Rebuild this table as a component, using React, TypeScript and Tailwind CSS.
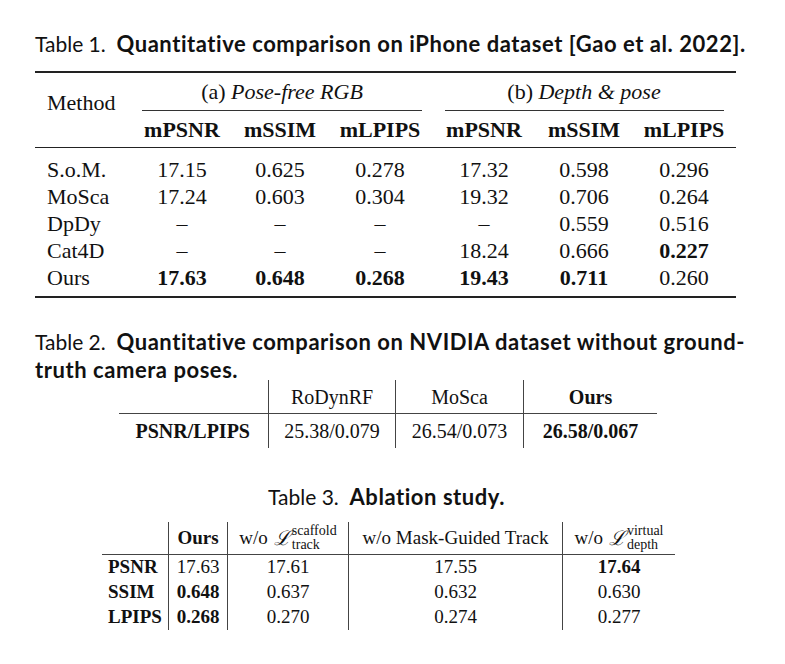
import React from "react";

const serif = "font-['Liberation_Serif','Times_New_Roman',serif]";
const sans = "font-['Lato','Open_Sans',sans-serif]";

const t1Rows = [
  { name: "S.o.M.", v: ["17.15", "0.625", "0.278", "17.32", "0.598", "0.296"], b: [] as number[] },
  { name: "MoSca", v: ["17.24", "0.603", "0.304", "19.32", "0.706", "0.264"], b: [] },
  { name: "DpDy", v: ["–", "–", "–", "–", "0.559", "0.516"], b: [] },
  { name: "Cat4D", v: ["–", "–", "–", "18.24", "0.666", "0.227"], b: [5] },
  { name: "Ours", v: ["17.63", "0.648", "0.268", "19.43", "0.711", "0.260"], b: [0, 1, 2, 3, 4] },
];

const t3Rows = [
  { name: "PSNR", v: ["17.63", "17.61", "17.55", "17.64"], b: [3] },
  { name: "SSIM", v: ["0.648", "0.637", "0.632", "0.630"], b: [0] },
  { name: "LPIPS", v: ["0.268", "0.270", "0.274", "0.277"], b: [0] },
];

function Loss({ sup, sub }: { sup: string; sub: string }) {
  return (
    <span className="inline-flex items-center ml-[6px]">
      <span className="italic text-[20px] mr-[1px]">ℒ</span>
      <span className="inline-flex flex-col text-[14px] leading-[14px]">
        <span>{sup}</span>
        <span>{sub}</span>
      </span>
    </span>
  );
}

export default function App() {
  return (
    <div className="w-[785px] h-[664px] bg-white text-[#111] pt-[30px]">
      {/* Table 1 */}
      <p className={`${sans} text-[21px] leading-[28px] pl-[35px] whitespace-nowrap`}>
        Table 1.&nbsp; <b className="text-[22px] tracking-[0.55px]">Quantitative comparison on iPhone dataset [Gao et al. 2022].</b>
      </p>
      <div className={`${serif} ml-[35px] mt-[13px] w-[701px] text-[22px]`}>
        <div className="h-[2px] bg-[#222]" />
        <div className="grid grid-cols-[97px_100px_96px_104px_104px_96px_104px] grid-rows-[37px_1px_36px]">
          <div className="row-span-3 flex items-center pl-3 pb-[16px]">Method</div>
          <div className="col-span-3 flex items-center justify-center">
            (a)&nbsp;<i>Pose-free RGB</i>
          </div>
          <div className="col-span-3 flex items-center justify-center">
            (b)&nbsp;<i>Depth &amp; pose</i>
          </div>
          <div className="col-span-3 mx-[10px] bg-[#333]" />
          <div className="col-span-3 ml-[13px] mr-[12px] bg-[#333]" />
          {["mPSNR", "mSSIM", "mLPIPS", "mPSNR", "mSSIM", "mLPIPS"].map((h, i) => (
            <div key={i} className="flex items-center justify-center font-bold">
              {h}
            </div>
          ))}
        </div>
        <div className="h-px bg-[#222]" />
        <div className="pt-[5px] pb-[8px]">
          {t1Rows.map((r) => (
            <div key={r.name} className="grid grid-cols-[97px_100px_96px_104px_104px_96px_104px] h-[27px] items-center">
              <div className="pl-3">{r.name}</div>
              {r.v.map((v, i) => (
                <div key={i} className={`text-center ${r.b.includes(i) ? "font-bold" : ""}`}>
                  {v}
                </div>
              ))}
            </div>
          ))}
        </div>
        <div className="h-[2px] bg-[#222]" />
      </div>

      {/* Table 2 */}
      <p className={`${sans} text-[21px] leading-[28px] pl-[35px] mt-[30px] whitespace-nowrap`}>
        Table 2.&nbsp; <b className="text-[22px] tracking-[0.55px]">Quantitative comparison on NVIDIA dataset without ground-</b>
        <br />
        <b className="text-[22px] tracking-[0.55px]">truth camera poses.</b>
      </p>
      <div className={`${serif} ml-[119px] -mt-[4px] w-[538px] text-[20px]`}>
        <div className="grid grid-cols-[149px_127px_128px_134px] h-[34px] border-b border-[#444]">
          <div />
          <div className="border-l border-[#444] flex items-center justify-center">RoDynRF</div>
          <div className="border-l border-[#444] flex items-center justify-center">MoSca</div>
          <div className="border-l border-[#444] flex items-center justify-center font-bold">Ours</div>
        </div>
        <div className="grid grid-cols-[149px_127px_128px_134px] h-[34px]">
          <div className="flex items-center justify-end pr-[18px] font-bold">PSNR/LPIPS</div>
          <div className="border-l border-[#444] flex items-center justify-center">25.38/0.079</div>
          <div className="border-l border-[#444] flex items-center justify-center">26.54/0.073</div>
          <div className="border-l border-[#444] flex items-center justify-center font-bold">26.58/0.067</div>
        </div>
      </div>

      {/* Table 3 */}
      <p className={`${sans} text-[21px] leading-[28px] mt-[35px] text-center pr-[12px]`}>
        Table 3.&nbsp; <b className="text-[22px] tracking-[0.55px]">Ablation study.</b>
      </p>
      <div className={`${serif} ml-[102px] mt-[11px] w-[573px] text-[19px]`}>
        <div className="grid grid-cols-[66px_59px_121px_214px_113px] h-[33px] border-b border-[#444]">
          <div />
          <div className="border-l border-[#444] flex items-center justify-center font-bold">Ours</div>
          <div className="border-l border-[#444] flex items-center justify-center">
            w/o<Loss sup="scaffold" sub="track" />
          </div>
          <div className="border-l border-[#444] flex items-center justify-center">w/o Mask-Guided Track</div>
          <div className="border-l border-[#444] flex items-center justify-center">
            w/o<Loss sup="virtual" sub="depth" />
          </div>
        </div>
        <div className="pb-[2px] grid grid-cols-[66px_59px_121px_214px_113px]">
          {t3Rows.map((r) => (
            <React.Fragment key={r.name}>
              <div className="h-[25px] flex items-center pl-[6px] font-bold">{r.name}</div>
              {r.v.map((v, i) => (
                <div
                  key={i}
                  className={`h-[25px] border-l border-[#444] flex items-center justify-center ${r.b.includes(i) ? "font-bold" : ""}`}
                >
                  {v}
                </div>
              ))}
            </React.Fragment>
          ))}
        </div>
      </div>
    </div>
  );
}
